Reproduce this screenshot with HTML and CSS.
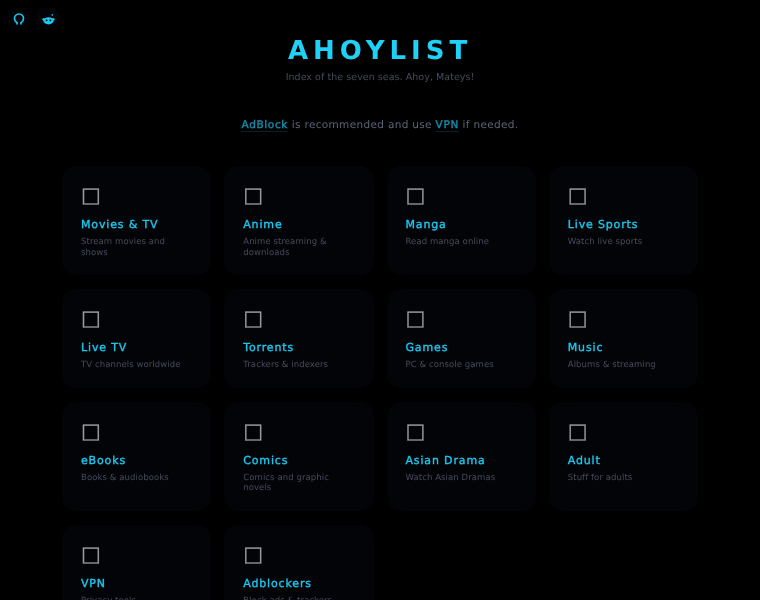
FILE: index.html
```html
<!DOCTYPE html>
<html lang="en">
<head>
    <meta charset="UTF-8">
    <meta name="viewport" content="width=device-width, initial-scale=1.0">
    <title>AhoyList</title>
    <link rel="stylesheet" href="styles.css">
</head>

<body>
    <div class="page">
    <div class="socials">
        <a class="social" href="#">
            <svg viewBox="0 0 24 24" width="12" height="13"><path d="M8 22v-3.500c-1.500-1-5-3-5-8.500a9 9 0 0 1 18 0c0 5.500-3.500 7.500-5 8.500v3.500" fill="none" stroke="currentColor" stroke-width="3.400"/></svg>
        </a>
        <a class="social" href="#">
            <svg viewBox="0 0 24 24" width="13" height="13"><ellipse cx="12" cy="14.500" rx="9.500" ry="6.500" fill="currentColor"/><circle cx="3" cy="11.500" r="2.200" fill="currentColor"/><circle cx="21" cy="11.500" r="2.200" fill="currentColor"/><circle cx="19" cy="3.500" r="1.500" fill="currentColor"/><circle cx="8.500" cy="13.500" r="1.700" fill="#010204"/><circle cx="15.500" cy="13.500" r="1.700" fill="#010204"/></svg>
        </a>
    </div>

    <header class="hero">
        <h1>AHOYLIST</h1>
        <p class="tagline">Index of the seven seas. Ahoy, Mateys!</p>
        <p class="notice"><a href="#">AdBlock</a> is recommended and use <a href="#">VPN</a> if needed.</p>
    </header>

    <main class="grid">
        <a class="card" href="#"><span class="icon">□</span><h2>Movies &amp; TV</h2><p>Stream movies and shows</p></a>
        <a class="card" href="#"><span class="icon">□</span><h2>Anime</h2><p>Anime streaming &amp; downloads</p></a>
        <a class="card" href="#"><span class="icon">□</span><h2>Manga</h2><p>Read manga online</p></a>
        <a class="card" href="#"><span class="icon">□</span><h2>Live Sports</h2><p>Watch live sports</p></a>
        <a class="card" href="#"><span class="icon">□</span><h2>Live TV</h2><p>TV channels worldwide</p></a>
        <a class="card" href="#"><span class="icon">□</span><h2>Torrents</h2><p>Trackers &amp; indexers</p></a>
        <a class="card" href="#"><span class="icon">□</span><h2>Games</h2><p>PC &amp; console games</p></a>
        <a class="card" href="#"><span class="icon">□</span><h2>Music</h2><p>Albums &amp; streaming</p></a>
        <a class="card" href="#"><span class="icon">□</span><h2>eBooks</h2><p>Books &amp; audiobooks</p></a>
        <a class="card" href="#"><span class="icon">□</span><h2>Comics</h2><p>Comics and graphic novels</p></a>
        <a class="card" href="#"><span class="icon">□</span><h2>Asian Drama</h2><p>Watch Asian Dramas</p></a>
        <a class="card" href="#"><span class="icon">□</span><h2>Adult</h2><p>Stuff for adults</p></a>
        <a class="card" href="#"><span class="icon">□</span><h2>VPN</h2><p>Privacy tools</p></a>
        <a class="card" href="#"><span class="icon">□</span><h2>Adblockers</h2><p>Block ads &amp; trackers</p></a>
    </main>
    </div>
</body>

</html>
```

FILE: styles.css
```css
* {
    box-sizing: border-box;
}

html,
body {
    height: 600px;
    overflow: hidden;
}

body {
    margin: 0;
    background: #000;
    font-family: "DejaVu Sans", sans-serif;
    text-rendering: geometricPrecision;
}

a {
    color: inherit;
    text-decoration: none;
}

.page {
    will-change: transform;
    background: #000;
}

.socials {
    display: flex;
    gap: 7px;
    padding: 8px 0 0 8px;
    height: 36px;
}

.social {
    display: flex;
    align-items: center;
    justify-content: center;
    width: 22px;
    height: 22px;
    border-radius: 6px;
    background: #020408;
    color: #1cc8f0;
}

.hero {
    text-align: center;
}

.hero h1 {
    margin: 0;
    font-size: 26px;
    font-weight: 700;
    line-height: 31px;
    letter-spacing: 4.950px;
    color: #1fd0f7;
}

.tagline {
    margin: 2px 0 0;
    font-size: 9.500px;
    line-height: 17px;
    letter-spacing: 0.050px;
    color: #464a5c;
}

.notice {
    margin: 30px 0 0;
    font-size: 10.500px;
    line-height: 18px;
    letter-spacing: 0.330px;
    color: #5f6478;
}

.notice a {
    -webkit-text-stroke: 0.350px currentColor;
    letter-spacing: 0.650px;
    color: #1590b0;
    border-bottom: 1px solid #06222c;
}

.grid {
    display: grid;
    grid-template-columns: repeat(4, 1fr);
    gap: 14px 13px;
    margin: 32px 62px 0;
}

.card {
    display: block;
    padding: 17px 19px 17px;
    border-radius: 14px;
    background: #030407;
}

.icon {
    display: block;
    height: 24px;
    margin-bottom: 10px;
    font-size: 21px;
    line-height: 24px;
    -webkit-text-stroke: 0.250px currentColor;
    color: #9a9ca2;
}

.card h2 {
    margin: 0;
    font-size: 11px;
    font-weight: 400;
    line-height: 16px;
    letter-spacing: 0.850px;
    -webkit-text-stroke: 0.350px currentColor;
    color: #1cc8f0;
}

.card p {
    margin: 4px 0 0;
    font-size: 8.500px;
    line-height: 10.500px;
    letter-spacing: 0.080px;
    color: #464a5c;
}
```
